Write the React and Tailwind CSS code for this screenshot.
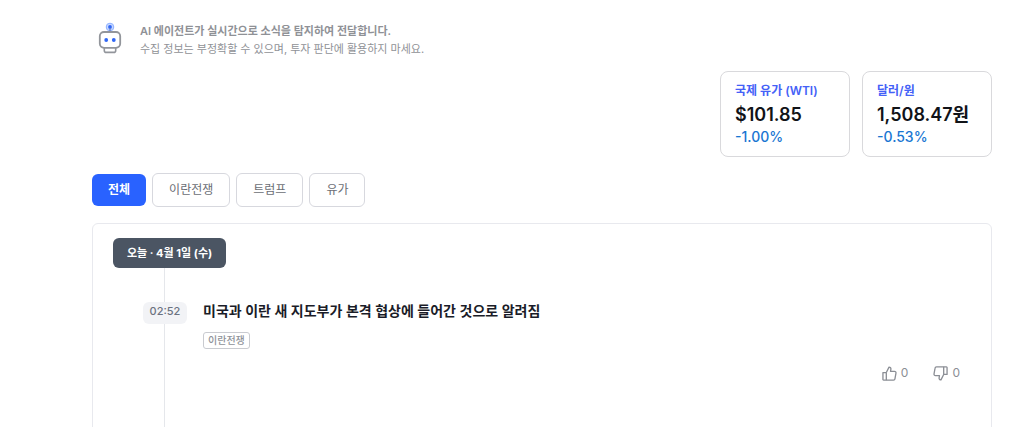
import { useState } from 'react'
import clsx from 'clsx'

const TABS = ['전체', '이란전쟁', '트럼프', '유가']

const QUOTES = [
  { label: '국제 유가 (WTI)', value: '$101.85', change: '-1.00%' },
  { label: '달러/원', value: '1,508.47원', change: '-0.53%' },
]

const NEWS = [
  {
    time: '02:52',
    title: '미국과 이란 새 지도부가 본격 협상에 들어간 것으로 알려짐',
    tag: '이란전쟁',
    likes: 0,
    dislikes: 0,
  },
]

function RobotIcon() {
  return (
    <svg className="h-8 w-6 shrink-0" viewBox="0 0 24 32" fill="none" aria-hidden="true">
      <circle cx="12" cy="5" r="3.8" fill="#c9d9ff" stroke="#8db0ff" strokeWidth="1" />
      <circle cx="12" cy="5" r="1.9" fill="#2f66f5" />
      <path d="M12 6v4" stroke="#6d86c8" strokeWidth="1.4" />
      <path d="M6.3 26v2.4a2 2 0 0 0 2 2h7.4a2 2 0 0 0 2-2V26" stroke="#92959b" strokeWidth="1.6" />
      <rect x="1.8" y="10" width="20.4" height="15.8" rx="4.2" fill="#fff" stroke="#92959b" strokeWidth="1.8" />
      <circle cx="8.2" cy="18" r="1.9" fill="#2f66f5" />
      <circle cx="15.8" cy="18" r="1.9" fill="#2f66f5" />
    </svg>
  )
}

function ThumbIcon({ down }) {
  return (
    <svg
      className={clsx('size-[15px]', down && 'rotate-180')}
      viewBox="0 0 16 16"
      fill="none"
      stroke="currentColor"
      strokeWidth="1.4"
      strokeLinejoin="round"
      aria-hidden="true"
    >
      <path d="M1 7h3.6v8H1.6a.6.6 0 0 1-.6-.6z" />
      <path d="M4.6 7 7.5 1.2c1.4 0 2.2 1 2 2.2L9.1 5.8h4.3c1 0 1.7.8 1.5 1.8l-1.1 6.1c-.1.8-.8 1.3-1.5 1.3H4.6" />
    </svg>
  )
}

function QuoteCard({ label, value, change }) {
  return (
    <div className="w-[130px] rounded-lg border border-[#d9d9dc] px-3.5 pt-2 pb-2.5">
      <p className="text-xs leading-[22px] font-semibold text-[#4461f7]">{label}</p>
      <p className="text-lg leading-[26px] font-semibold text-[#111318]">{value}</p>
      <p className="text-sm leading-[18px] font-medium text-[#1976d2]">{change}</p>
    </div>
  )
}

function NewsItem({ time, title, tag, likes, dislikes }) {
  return (
    <article className="flex items-start gap-4 pl-[30px]">
      <time className="relative w-11 rounded-md bg-[#f2f3f6] pb-1 text-center text-[11px] leading-[18px] font-medium text-[#6b7280]">
        {time}
      </time>
      <div className="flex-1">
        <h2 className="text-sm leading-[18px] font-semibold text-[#1a1c28]">{title}</h2>
        <span className="mt-3 inline-block rounded-[3px] border border-[#c9cbd0] px-1 text-[10px] leading-[15px] font-medium text-[#8e9299]">
          {tag}
        </span>
        <div className="mt-[15px] flex justify-end gap-[25px] pr-[11px] text-xs text-[#8b8e95]">
          <button type="button" aria-label="좋아요" className="flex items-center gap-1">
            <ThumbIcon />
            {likes}
          </button>
          <button type="button" aria-label="싫어요" className="flex items-center gap-1">
            <ThumbIcon down />
            {dislikes}
          </button>
        </div>
      </div>
    </article>
  )
}

export default function App() {
  const [tab, setTab] = useState('전체')
  const items = NEWS.filter(n => tab === '전체' || n.tag === tab)

  return (
    <div className="h-screen overflow-hidden bg-white pl-[92px] pr-[25px] pt-[22px] font-['Inter','Noto_Sans_CJK_KR',sans-serif]">
      {/* 안내 문구 */}
      <header className="flex items-start gap-[18px] pl-1.5">
        <RobotIcon />
        <div className="text-[11px] leading-[18px] text-[#8f9196]">
          <p className="font-semibold">AI 에이전트가 실시간으로 소식을 탐지하여 전달합니다.</p>
          <p>수집 정보는 부정확할 수 있으며, 투자 판단에 활용하지 마세요.</p>
        </div>
      </header>

      {/* 시세 카드 */}
      <section className="mt-[13px] flex justify-end gap-3">
        {QUOTES.map(q => (
          <QuoteCard key={q.label} {...q} />
        ))}
      </section>

      {/* 카테고리 탭 */}
      <nav className="mt-4 flex items-center gap-1.5">
        {TABS.map(name => (
          <button
            key={name}
            type="button"
            onClick={() => setTab(name)}
            className={clsx(
              'rounded-md px-4 text-xs leading-8',
              tab === name
                ? 'bg-[#2962ff] font-bold text-white'
                : 'border border-[#d7d8de] bg-white text-[#6b6e75]',
            )}
          >
            {name}
          </button>
        ))}
      </nav>

      {/* 타임라인 */}
      <main className="mt-4 rounded-md border border-[#e8e9ee] px-5 pt-3.5">
        <div className="relative pb-40">
          <div className="absolute inset-y-0 left-[51px] w-px bg-[#e5e7eb]" />
          <h3 className="relative mb-[34px] w-fit rounded-md bg-[#4b5563] px-3.5 text-[11px] leading-[30px] font-bold text-white">
            오늘 · 4월 1일 (수)
          </h3>
          {items.map(n => (
            <NewsItem key={n.time} {...n} />
          ))}
        </div>
      </main>
    </div>
  )
}
